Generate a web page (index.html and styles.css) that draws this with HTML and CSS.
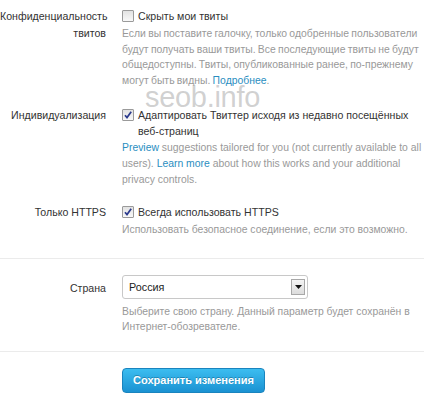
FILE: index.html
```html
<!DOCTYPE html>
<html lang="ru">
<head>
<meta charset="utf-8">
<link rel="stylesheet" href="styles.css">
</head>
<body>
<div class="page">
  <div class="row row-privacy">
    <div class="label">Конфиденциальность<br>твитов</div>
    <div class="field">
      <div class="check"><span class="box"></span><span class="main">Скрыть мои твиты</span></div>
      <p class="desc">Если вы поставите галочку, только одобренные пользователи будут получать ваши твиты. Все последующие твиты не будут общедоступны. Твиты, опубликованные ранее, по-прежнему могут быть видны. <a href="#">Подробнее</a>.</p>
    </div>
  </div>
  <div class="row row-personal">
    <div class="label">Индивидуализация</div>
    <div class="field">
      <div class="check"><span class="box checked"><svg viewBox="0 0 12 12" width="12" height="12"><path d="M3 6.2 L5 8.6 L9.2 2.8" fill="none" stroke="#2b3a8c" stroke-width="1.7"/></svg></span><span class="main">Адаптировать Твиттер исходя из недавно посещённых веб-страниц</span></div>
      <p class="desc"><a href="#">Preview</a> suggestions tailored for you (not currently available to all users). <a href="#">Learn more</a> about how this works and your additional privacy controls.</p>
    </div>
  </div>
  <div class="row row-https">
    <div class="label">Только HTTPS</div>
    <div class="field">
      <div class="check"><span class="box checked"><svg viewBox="0 0 12 12" width="12" height="12"><path d="M3 6.2 L5 8.6 L9.2 2.8" fill="none" stroke="#2b3a8c" stroke-width="1.7"/></svg></span><span class="main">Всегда использовать HTTPS</span></div>
      <p class="desc">Использовать безопасное соединение, если это возможно.</p>
    </div>
  </div>
  <hr class="sep">
  <div class="row row-country">
    <div class="label label-mid">Страна</div>
    <div class="field">
      <div class="select"><span class="select-val">Россия</span><span class="select-btn"><svg viewBox="0 0 7 4" width="7" height="4"><path d="M0 0 H7 L3.5 4 Z" fill="#111"/></svg></span></div>
      <p class="desc">Выберите свою страну. Данный параметр будет сохранён в Интернет-обозревателе.</p>
    </div>
  </div>
  <hr class="sep sep2">
  <div class="row row-save">
    <div></div>
    <div class="field"><button class="save">Сохранить изменения</button></div>
  </div>
  <div class="watermark">seob.info</div>
</div>
</body>
</html>
```
FILE: styles.css
```css
html, body {
  margin: 0;
  padding: 0;
  background: #fff;
}
.page {
  position: relative;
  width: 424px;
  height: 401px;
  overflow: hidden;
  font-family: "Liberation Sans", Arial, sans-serif;
  font-size: 10.6px;
  color: #333;
}
.row {
  display: grid;
  grid-template-columns: 106px 1fr;
  column-gap: 16px;
}
.label {
  text-align: right;
  line-height: 17px;
  color: #333;
  white-space: nowrap;
}
.row-privacy { padding-top: 8px; }
.row-personal { padding-top: 19px; }
.row-https { padding-top: 16px; }
.check {
  display: flex;
  align-items: flex-start;
  gap: 4px;
}
.box {
  flex: none;
  width: 10px;
  height: 10px;
  margin-top: 2px;
  border: 1px solid #9a9a9a;
  border-radius: 1px;
  background: linear-gradient(#e2e2e2, #f8f8f8);
  position: relative;
}
.box svg {
  position: absolute;
  left: -1px;
  top: -1px;
}
.main {
  line-height: 16px;
  color: #333;
}
.desc {
  margin: 2px 0 0;
  font-size: 10.4px;
  line-height: 15.5px;
  color: #999;
  padding-right: 2px;
}
.row-privacy .desc { word-spacing: -0.6px; }
.row-personal .desc { margin-top: 1px; line-height: 16px; }
.desc a {
  color: #2a8ebf;
  text-decoration: none;
}
.sep {
  border: 0;
  border-top: 1px solid #ebebeb;
  margin: 20px 0 0;
}
.row-country { padding-top: 16px; }
.label-mid { line-height: 24px; margin-top: 1px; }
.select {
  width: 176px;
  height: 22px;
  border: 1px solid #c8c8c8;
  border-radius: 3px;
  display: flex;
  align-items: center;
  justify-content: space-between;
  padding: 0 2px 0 6px;
  background: #fff;
  box-sizing: content-box;
}
.select-val { color: #222; font-size: 10.8px; }
.select-btn {
  width: 12px;
  height: 14px;
  border: 1px solid #a8a8a8;
  background: linear-gradient(#f4f4f4, #dcdcdc);
  display: flex;
  align-items: center;
  justify-content: center;
}
.row-country .desc { margin-top: 5px; }
.sep2 { margin-top: 16px; }
.row-save { padding-top: 16px; }
.save {
  width: 143px;
  height: 25px;
  border: 1px solid #1a84be;
  border-radius: 4px;
  background: linear-gradient(#3cbdf0, #1a92d2);
  color: #fff;
  font-family: "Liberation Sans", Arial, sans-serif;
  font-size: 11px;
  font-weight: bold;
  text-shadow: 0 -1px 0 rgba(0,0,0,0.25);
  padding: 0;
}
.watermark {
  position: absolute;
  left: 145px;
  top: 82px;
  font-family: "Liberation Sans", Arial, sans-serif;
  font-size: 29px;
  line-height: 30px;
  color: rgba(170,170,170,0.55);
  letter-spacing: -0.3px;
}
```
